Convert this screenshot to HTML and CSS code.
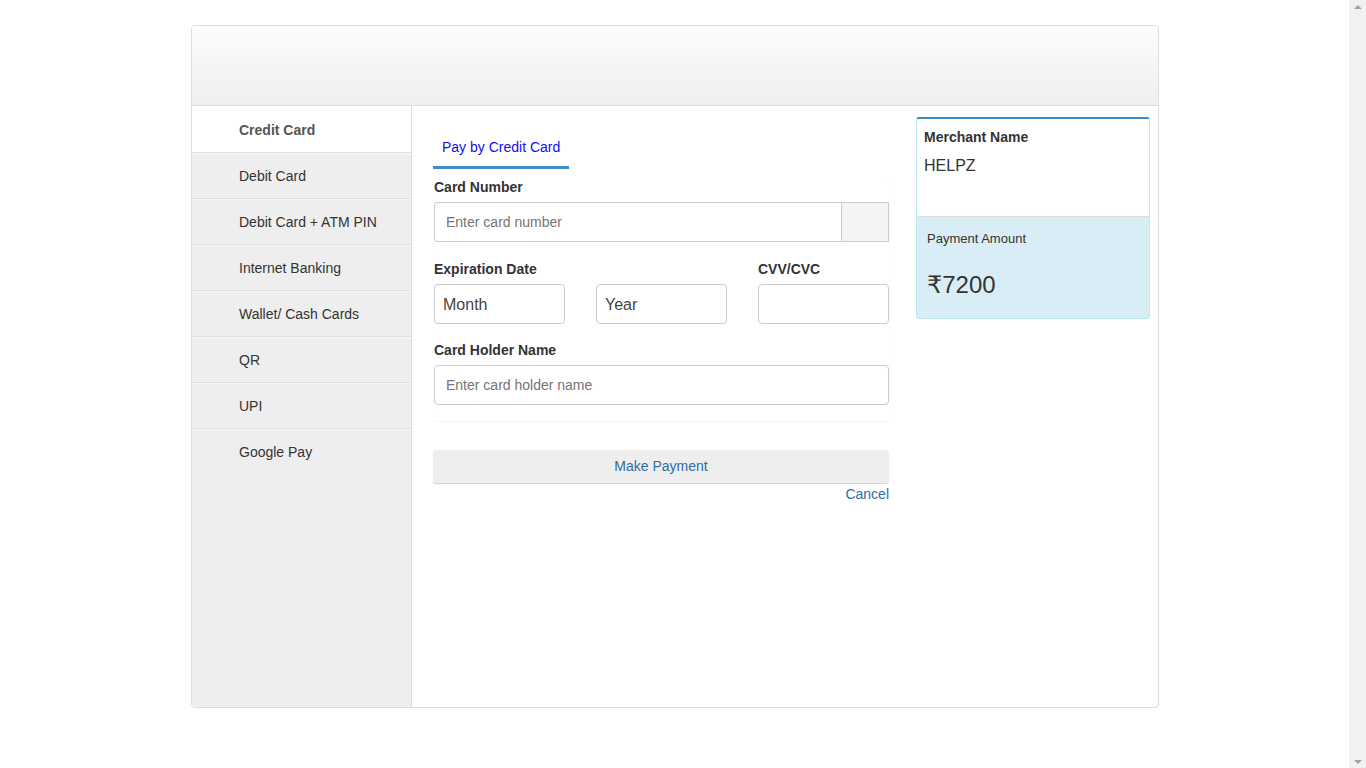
FILE: index.html
```html
<!DOCTYPE html>
<html lang="en">
<head>
<meta charset="utf-8">
<title>Payment</title>
<link rel="stylesheet" href="styles.css">
</head>
<body>
<div class="viewport">
  <div class="panel">
    <div class="panel-header"></div>
    <div class="panel-body">
      <ul class="methods">
        <li class="method active">Credit Card</li>
        <li class="method">Debit Card</li>
        <li class="method">Debit Card + ATM PIN</li>
        <li class="method">Internet Banking</li>
        <li class="method">Wallet/ Cash Cards</li>
        <li class="method">QR</li>
        <li class="method">UPI</li>
        <li class="method">Google Pay</li>
      </ul>
      <div class="main">
        <div class="tabs"><span class="tab">Pay by Credit Card</span></div>
        <div class="form-box">
          <div class="group first">
            <label class="label">Card Number</label>
            <div class="input-group">
              <input class="input input-left" type="text" placeholder="Enter card number">
              <span class="addon"></span>
            </div>
          </div>
          <div class="group grid3">
            <label class="label span2">Expiration Date</label>
            <label class="label">CVV/CVC</label>
            <select class="input select"><option>Month</option></select>
            <select class="input select"><option>Year</option></select>
            <input class="input" type="password">
          </div>
          <div class="group">
            <label class="label">Card Holder Name</label>
            <input class="input" type="text" placeholder="Enter card holder name">
          </div>
        </div>
        <button class="pay-btn" type="button">Make Payment</button>
        <div class="cancel-row"><a class="cancel" href="#">Cancel</a></div>
      </div>
      <div class="side">
        <div class="summary">
          <div class="summary-top">
            <div class="m-title">Merchant Name</div>
            <div class="m-name">HELPZ</div>
          </div>
          <div class="summary-bottom">
            <div class="amt-label">Payment Amount</div>
            <div class="amt">₹7200</div>
          </div>
        </div>
      </div>
    </div>
  </div>
</div>
<div class="scrollbar">
  <span class="arrow up"></span>
  <span class="arrow down"></span>
</div>
</body>
</html>
```
FILE: styles.css
```css
* { box-sizing: border-box; }
html, body { height: 100%; }
body {
  margin: 0;
  display: flex;
  font-family: "Liberation Sans", Arial, "DejaVu Sans", sans-serif;
  font-size: 14px;
  line-height: 20px;
  color: #333;
  background: #fff;
  overflow: hidden;
}
.viewport {
  flex: 1;
  padding: 25px 0 0 1px;
}
.panel {
  width: 968px;
  margin: 0 auto;
  border: 1px solid #ddd;
  border-radius: 4px;
  overflow: hidden;
}
.panel-header {
  height: 80px;
  border-bottom: 1px solid #ddd;
  background: linear-gradient(to bottom, #fdfdfd 0%, #f5f5f5 50%, #eff0f0 100%);
}
.panel-body {
  display: flex;
  height: 601px;
}
.methods {
  list-style: none;
  margin: 0;
  padding: 1px 0 0;
  width: 220px;
  background: #eee;
  border-right: 1px solid #ddd;
}
.method {
  height: 46px;
  padding: 13px 0 0 47px;
  border-bottom: 1px solid #ddd;
  box-shadow: inset 0 1px 0 #f7f7f7;
  color: #333;
}
.method:last-child { border-bottom: none; }
.method.active {
  background: #fff;
  font-weight: bold;
  color: #555;
  margin-top: -1px;
  height: 47px;
  padding-top: 14px;
  box-shadow: none;
}
.main {
  width: 504px;
  padding: 20px 27px 0 21px;
}
.tabs { display: flex; }
.tab {
  display: inline-block;
  width: 136px;
  padding: 11px 0 9px 9px;
  border-bottom: 3px solid #428bca;
  color: #1010f0;
}
.form-box {
  margin-top: 8px;
  padding-bottom: 16px;
  border-radius: 4px;
  box-shadow: 0 1px 2px rgba(0, 0, 0, 0.05);
}
.group { margin-bottom: 16px; }
.group.first { margin-bottom: 17px; }
.group:last-child { margin-bottom: 0; }
.label {
  display: block;
  font-weight: bold;
  margin: 0 0 5px 1px;
  color: #333;
}
.grid3 {
  display: grid;
  grid-template-columns: 1fr 1fr 1fr;
  column-gap: 30px;
}
.span2 { grid-column: span 2; }
.input {
  display: block;
  width: calc(100% - 1px);
  height: 40px;
  margin-left: 1px;
  padding: 0 11px;
  border: 1px solid #ccc;
  border-radius: 4px;
  font-family: inherit;
  font-size: 14px;
  color: #333;
  background: #fff;
  outline: none;
}
.input::placeholder { color: #757575; }
.select {
  -webkit-appearance: none;
  appearance: none;
  font-size: 16px;
  padding: 0 8px;
  color: #444;
}
.input-group { display: flex; }
.input-left {
  flex: 1;
  width: auto;
  border-radius: 4px 0 0 4px;
  border-right: none;
}
.addon {
  width: 48px;
  height: 40px;
  background: #f3f3f3;
  border: 1px solid #ccc;
}
.pay-btn {
  display: block;
  width: 100%;
  height: 33px;
  margin-top: 29px;
  border: none;
  border-radius: 3px;
  background: #eee;
  box-shadow: 0 1px 1px rgba(0, 0, 0, 0.18);
  color: #2e6da4;
  font-family: inherit;
  font-size: 14px;
  padding: 0 0 1px;
}
.cancel-row {
  text-align: right;
  margin-top: 1px;
}
.cancel {
  color: #2e6da4;
  text-decoration: none;
}
.side {
  width: 234px;
  padding-top: 11px;
}
.summary {
  border: 1px solid #bce8f1;
  border-top: 2px solid #3c8bc4;
  border-radius: 3px;
  overflow: hidden;
}
.summary-top {
  height: 98px;
  padding: 8px 7px 0;
  border-bottom: 1px solid #ddd;
  background: #fff;
}
.m-title { font-weight: bold; color: #333; }
.m-name {
  margin-top: 9px;
  font-size: 16px;
  color: #333;
}
.summary-bottom {
  height: 101px;
  padding: 12px 10px 0;
  background: #d9edf7;
}
.amt-label { font-size: 13px; color: #333; }
.amt {
  margin-top: 21px;
  font-size: 24px;
  line-height: 30px;
  color: #333;
}
.scrollbar {
  width: 17px;
  flex: none;
  background: #f1f1f1;
  display: flex;
  flex-direction: column;
  justify-content: space-between;
  align-items: center;
  padding: 5px 0 4px;
}
.arrow {
  width: 0;
  height: 0;
  border-left: 4px solid transparent;
  border-right: 4px solid transparent;
}
.arrow.up { border-bottom: 4px solid #a3a3a3; }
.arrow.down { border-top: 4px solid #a3a3a3; }
```
